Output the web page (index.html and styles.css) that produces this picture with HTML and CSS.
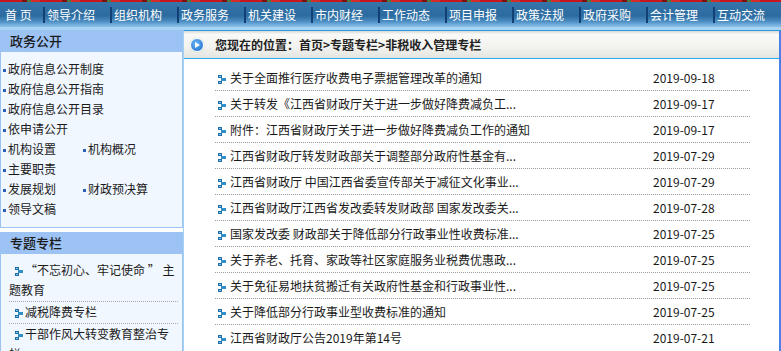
FILE: index.html
```html
<!DOCTYPE html>
<html lang="zh-CN">
<head>
    <meta charset="UTF-8">
    <title>非税收入管理专栏</title>
    <link rel="stylesheet" href="styles.css">
</head>
<body>
    <svg width="0" height="0" class="defs">
        <symbol id="arr" viewBox="0 0 8 9">
            <rect x="0" y="0" width="4" height="3" fill="#1f6fa8"/>
            <rect x="3" y="3" width="5" height="3" fill="#2f8fc8"/>
            <rect x="0" y="6" width="4" height="3" fill="#1f6fa8"/>
            <rect x="1" y="1" width="2" height="1" fill="#7fc0e8"/>
            <rect x="1" y="7" width="2" height="1" fill="#7fc0e8"/>
        </symbol>
    </svg>

    <div class="topline"></div>
    <div class="nav">
        <a class="first">首 页</a>
        <a><span>领导介绍</span></a>
        <a><span>组织机构</span></a>
        <a><span>政务服务</span></a>
        <a><span>机关建设</span></a>
        <a><span>市内财经</span></a>
        <a><span>工作动态</span></a>
        <a><span>项目申报</span></a>
        <a><span>政策法规</span></a>
        <a><span>政府采购</span></a>
        <a><span>会计管理</span></a>
        <a><span>互动交流</span></a>
    </div>
    <div class="navline"></div>

    <div class="main">
        <div class="side">
            <div class="box">
                <div class="box-title">政务公开</div>
                <ul class="dots">
                    <li>政府信息公开制度</li>
                    <li>政府信息公开指南</li>
                    <li>政府信息公开目录</li>
                    <li>依申请公开</li>
                    <li class="half">机构设置</li><li class="half">机构概况</li>
                    <li>主要职责</li>
                    <li class="half">发展规划</li><li class="half">财政预决算</li>
                    <li>领导文稿</li>
                </ul>
            </div>
            <div class="box">
                <div class="box-title">专题专栏</div>
                <ul class="topics">
                    <li><svg class="ico"><use href="#arr"/></svg>“不忘初心、牢记使命 ” 主题教育</li>
                    <li><svg class="ico"><use href="#arr"/></svg>减税降费专栏</li>
                    <li><svg class="ico"><use href="#arr"/></svg>干部作风大转变教育整治专栏</li>
                </ul>
            </div>
        </div>

        <div class="content">
            <div class="crumb">
                <span class="crumb-ico"></span>
                您现在的位置：首页&gt;专题专栏&gt;非税收入管理专栏
            </div>
            <ul class="news">
                <li><span class="t"><svg class="ico"><use href="#arr"/></svg>关于全面推行医疗收费电子票据管理改革的通知</span><span class="d">2019-09-18</span></li>
                <li><span class="t"><svg class="ico"><use href="#arr"/></svg>关于转发《江西省财政厅关于进一步做好降费减负工...</span><span class="d">2019-09-17</span></li>
                <li><span class="t"><svg class="ico"><use href="#arr"/></svg>附件：江西省财政厅关于进一步做好降费减负工作的通知</span><span class="d">2019-09-17</span></li>
                <li><span class="t"><svg class="ico"><use href="#arr"/></svg>江西省财政厅转发财政部关于调整部分政府性基金有...</span><span class="d">2019-07-29</span></li>
                <li><span class="t"><svg class="ico"><use href="#arr"/></svg>江西省财政厅 中国江西省委宣传部关于减征文化事业...</span><span class="d">2019-07-29</span></li>
                <li><span class="t"><svg class="ico"><use href="#arr"/></svg>江西省财政厅江西省发改委转发财政部 国家发改委关...</span><span class="d">2019-07-28</span></li>
                <li><span class="t"><svg class="ico"><use href="#arr"/></svg>国家发改委 财政部关于降低部分行政事业性收费标准...</span><span class="d">2019-07-25</span></li>
                <li><span class="t"><svg class="ico"><use href="#arr"/></svg>关于养老、托育、家政等社区家庭服务业税费优惠政...</span><span class="d">2019-07-25</span></li>
                <li><span class="t"><svg class="ico"><use href="#arr"/></svg>关于免征易地扶贫搬迁有关政府性基金和行政事业性...</span><span class="d">2019-07-25</span></li>
                <li><span class="t"><svg class="ico"><use href="#arr"/></svg>关于降低部分行政事业型收费标准的通知</span><span class="d">2019-07-25</span></li>
                <li><span class="t"><svg class="ico"><use href="#arr"/></svg>江西省财政厅公告2019年第14号</span><span class="d">2019-07-21</span></li>
            </ul>
        </div>
    </div>
</body>
</html>
```

FILE: styles.css
```css
body {
    margin: 0;
    width: 781px;
    font-family: "Noto Sans CJK SC", "Liberation Sans", sans-serif;
    font-size: 12px;
    color: #222;
    background: #fff;
    overflow: hidden;
}
ul {
    list-style: none;
    margin: 0;
    padding: 0;
}
.defs {
    position: absolute;
}
.topline {
    height: 2px;
    background: repeating-linear-gradient(90deg, #c8161c 0 22px, #7a1010 22px 27px, #4f7a3a 27px 31px, #d42a2a 31px 40px);
}
.nav {
    display: flex;
    align-items: center;
    height: 25px;
    background: linear-gradient(#3575aa, #2b6b9f 55%, #4d8fc4 78%, #8cc2ea);
}
.nav a {
    display: flex;
    align-items: center;
    width: 67px;
    color: #fff;
    font-size: 12px;
    line-height: 16px;
}
.nav a.first {
    width: 38px;
    padding-left: 5px;
}
.nav a span {
    border-left: 2px solid #123f74;
    padding-left: 2px;
}
.navline {
    height: 3px;
    background: #a8d4f4;
}
.main {
    display: flex;
    align-items: flex-start;
}
.side {
    width: 183px;
    display: flex;
    flex-direction: column;
    gap: 4px;
}
.box {
    background: #f1f7ff;
    border: 1px solid #9dc2f1;
    border-top: none;
}
.box-title {
    height: 22px;
    line-height: 22px;
    margin: 0 -1px;
    padding-left: 10px;
    background: #9dc2f4;
    font-size: 13px;
    font-weight: 500;
    color: #1a1a1a;
}
.dots {
    display: flex;
    flex-wrap: wrap;
    padding: 7px 0 8px 2px;
}
.dots li {
    width: 100%;
    line-height: 20px;
    color: #1a1a1a;
}
.dots li.half {
    width: 80px;
}
.dots li::before {
    content: "";
    display: inline-block;
    width: 3px;
    height: 3px;
    margin-right: 2px;
    background: #2f5fb8;
    vertical-align: middle;
}
.topics {
    padding: 6px 4px 0 8px;
}
.topics li {
    line-height: 20px;
    padding: 0 0 1px 0;
    border-bottom: 1px dotted #aaa;
    color: #1a1a1a;
}
.topics li:last-child {
    border-bottom: none;
}
.topics .ico {
    margin: 0 2px 0 6px;
}
.ico {
    width: 8px;
    height: 9px;
    vertical-align: -1px;
}
.content {
    flex: 1;
    height: 321px;
    border-top: 1px solid #2d9be0;
    border-left: 1px solid #a6d2f2;
    border-right: 2px solid #4b80e6;
}
.crumb {
    display: flex;
    align-items: center;
    height: 27px;
    padding-left: 6px;
    background: linear-gradient(#d8d8d4, #fafaf8 12%, #f2f2ef 60%, #e4e4e0);
    border-bottom: 1px solid #2aaaf0;
    font-weight: bold;
    color: #222;
}
.crumb-ico {
    width: 12px;
    height: 12px;
    margin-right: 11px;
    border: 1px solid #fff;
    border-radius: 50%;
    background: radial-gradient(circle at 40% 35%, #6ab4f4, #1769cc);
    box-shadow: 0 0 1px #8aa;
    position: relative;
}
.crumb-ico::after {
    content: "";
    position: absolute;
    left: 4px;
    top: 3px;
    border-left: 5px solid #fff;
    border-top: 3px solid transparent;
    border-bottom: 3px solid transparent;
}
.news {
    width: 535px;
    margin: 6px 0 0 31px;
}
.news li {
    display: flex;
    height: 25px;
    line-height: 25px;
    border-bottom: 1px dotted #9a9a9a;
}
.news li:last-child {
    border-bottom: none;
}
.news .t {
    width: 438px;
    white-space: nowrap;
    overflow: hidden;
    color: #1a1a1a;
}
.news .ico {
    margin: 0 4px 0 3px;
}
.news .d {
    color: #1a1a1a;
}
```
